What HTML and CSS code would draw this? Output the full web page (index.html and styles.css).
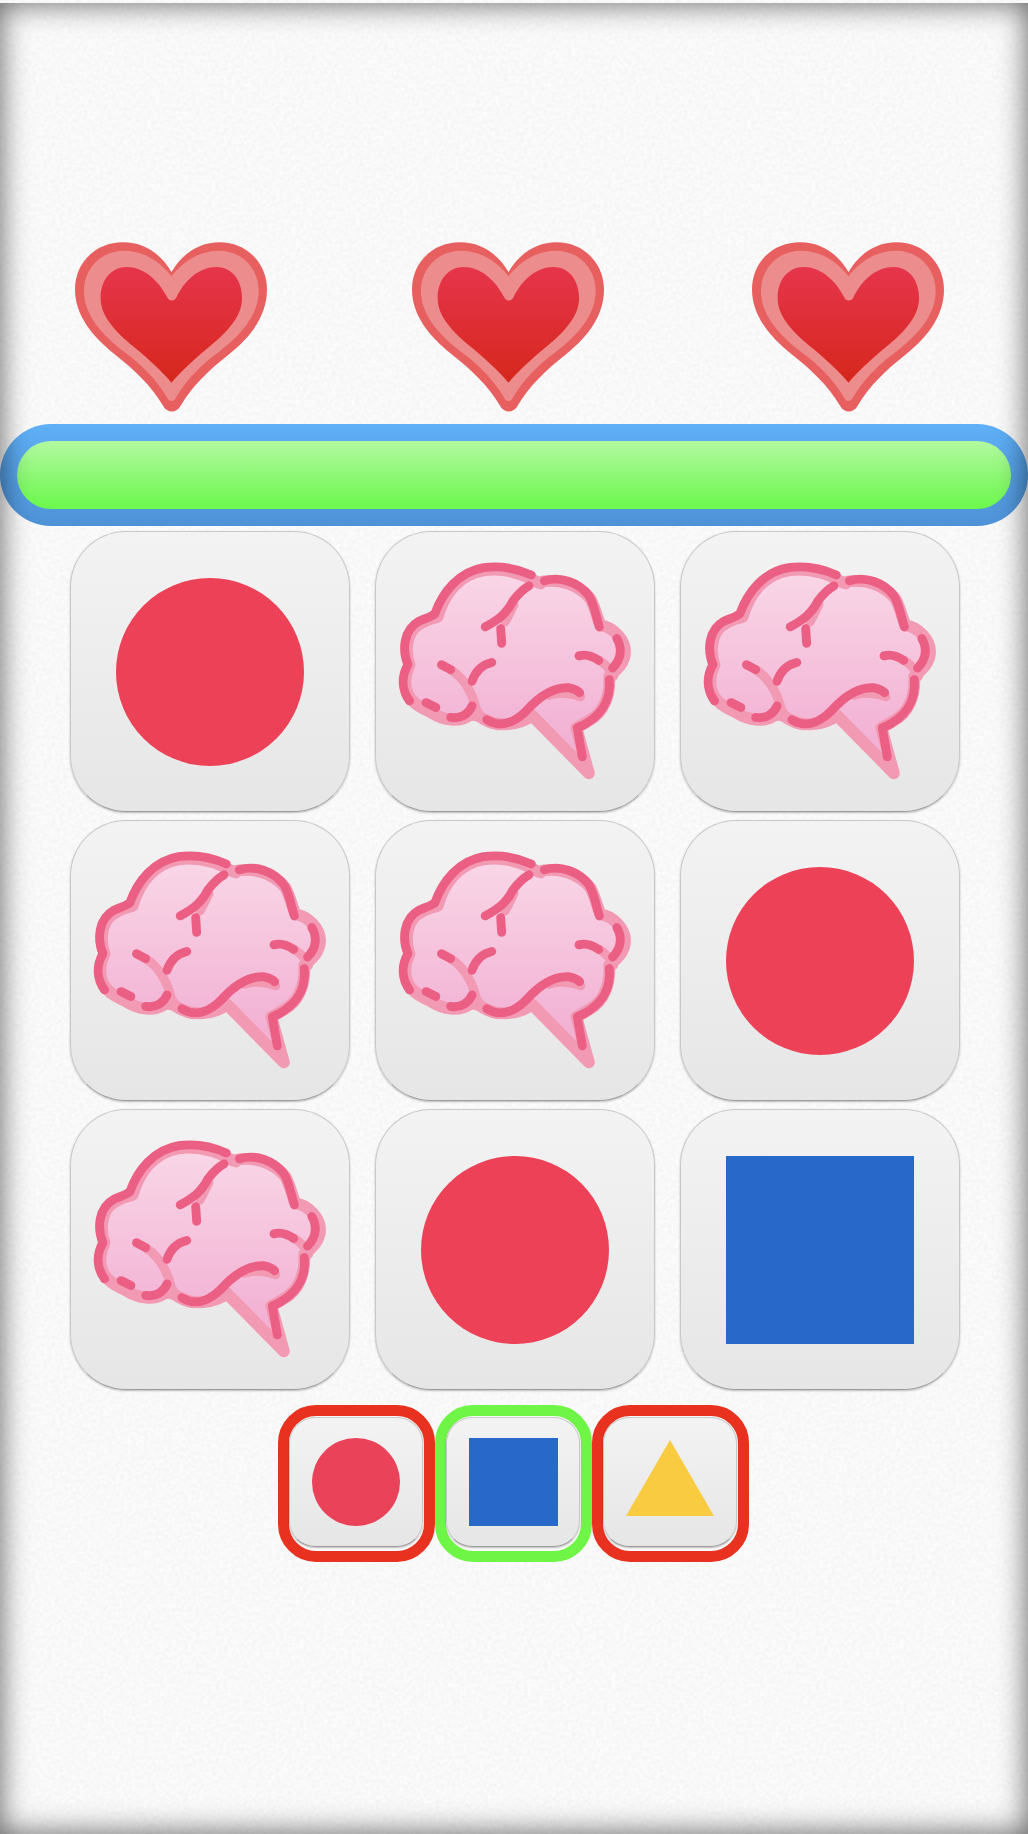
FILE: index.html
```html
<!DOCTYPE html>
<html lang="en">
<head>
  <meta charset="UTF-8">
  <title>Shape memory</title>
  <link rel="stylesheet" href="styles.css">
</head>
<body>

<svg class="defs" aria-hidden="true">
  <defs>
    <linearGradient id="heartRed" x1="0" y1="0" x2="0" y2="1">
      <stop offset="0" stop-color="#e6354c"/>
      <stop offset="1" stop-color="#d6271c"/>
    </linearGradient>
    <linearGradient id="brainPink" x1="0" y1="0" x2="0" y2="1">
      <stop offset="0" stop-color="#f9d7e7"/>
      <stop offset="1" stop-color="#f1aad0"/>
    </linearGradient>

    <symbol id="heart" viewBox="45 38 577 512">
      <path fill="#e7605f" d="M335,127 C305,75 255,38 190,38 C105,38 45,100 45,180 C45,255 95,320 165,375 C225,422 275,470 310,530 C322,552 350,552 362,530 C397,470 447,422 507,375 C577,320 622,255 622,180 C622,100 560,38 480,38 C415,38 365,75 335,127Z"/>
      <path fill="#ec8c8d" d="M335,140 C300,95 250,63 192,63 C125,63 72,115 72,185 C72,255 125,315 190,365 C245,405 290,450 322,505 C328,518 342,518 348,505 C380,450 425,405 480,365 C545,315 597,255 597,185 C597,115 545,63 478,63 C420,63 370,95 335,140Z"/>
      <path fill="url(#heartRed)" d="M322,203 C295,150 250,112 200,112 C155,112 122,150 122,205 C122,260 165,305 225,355 C270,392 305,425 335,460 C365,425 400,392 445,355 C505,305 547,260 547,205 C547,150 515,112 470,112 C420,112 375,150 350,203 C343,216 329,216 322,203Z"/>
    </symbol>

    <symbol id="brain" viewBox="13 3 845 845">
      <path fill="url(#brainPink)" stroke="#f29ab4" stroke-width="36" stroke-linejoin="round" d="M660,735 L488,560 C445,590 385,595 340,570 C320,555 305,555 295,560 C265,580 220,575 180,550 C150,535 115,520 105,480 C98,450 105,425 115,405 C100,365 105,310 140,285 C160,270 180,265 200,260 C220,190 265,130 340,118 C400,110 455,125 505,155 C565,140 630,160 665,205 C680,235 685,260 695,285 C735,290 770,330 770,365 C770,400 745,420 722,440 C725,500 705,550 660,575 C645,585 635,590 622,597Z"/>
      <g fill="none" stroke="#f29ab4" stroke-width="28" stroke-linecap="round">
        <path d="M240,420 C280,445 305,490 318,540 C330,570 355,585 385,590"/>
        <path d="M690,392 C710,402 725,420 735,440"/>
        <path d="M405,275 C420,250 425,235 432,222"/>
        <path d="M470,135 L515,162"/>
        <path d="M540,497 C570,487 610,492 635,502"/>
      </g>
      <g fill="none" stroke="#ec5f84" stroke-width="27" stroke-linecap="round" stroke-linejoin="round">
        <path d="M115,515 C90,480 90,440 110,405 C92,360 95,300 145,272 C160,265 175,262 192,250 C215,185 265,122 340,110 C390,103 440,112 485,132"/>
        <path d="M525,150 C575,135 630,155 660,195 C680,230 680,255 692,290"/>
        <path d="M745,325 C760,350 762,385 732,415"/>
        <path d="M722,450 C728,510 700,565 625,597 L640,685"/>
        <path d="M165,520 L195,535"/>
        <path d="M240,565 C270,570 295,555 305,530"/>
        <path d="M212,405 L240,420"/>
        <path d="M305,455 C315,425 335,405 365,398"/>
        <path d="M350,572 C395,600 440,575 470,545 C510,500 555,472 600,475 C615,478 625,482 632,490"/>
        <path d="M345,290 C385,268 410,250 430,210 C445,190 460,175 478,165"/>
        <path d="M395,340 L392,295"/>
        <path d="M630,378 C650,372 670,378 690,392"/>
      </g>
    </symbol>
  </defs>
</svg>

<div class="game">
  <div class="lives">
    <svg class="heart"><use href="#heart"/></svg>
    <svg class="heart"><use href="#heart"/></svg>
    <svg class="heart"><use href="#heart"/></svg>
  </div>

  <div class="timer"><div class="timer-fill"></div></div>

  <div class="board">
    <div class="tile"><div class="circle"></div></div>
    <div class="tile"><svg class="brain"><use href="#brain"/></svg></div>
    <div class="tile"><svg class="brain"><use href="#brain"/></svg></div>
    <div class="tile"><svg class="brain"><use href="#brain"/></svg></div>
    <div class="tile"><svg class="brain"><use href="#brain"/></svg></div>
    <div class="tile"><div class="circle"></div></div>
    <div class="tile"><svg class="brain"><use href="#brain"/></svg></div>
    <div class="tile"><div class="circle"></div></div>
    <div class="tile"><div class="square"></div></div>
  </div>

  <div class="answers">
    <button class="answer wrong"><span class="tile small"><span class="circle"></span></span></button>
    <button class="answer right"><span class="tile small"><span class="square"></span></span></button>
    <button class="answer wrong"><span class="tile small"><span class="triangle"></span></span></button>
  </div>
</div>

</body>
</html>
```

FILE: styles.css
```css
html, body {
  margin: 0;
  height: 100%;
}

body {
  position: relative;
  height: 1834px;
  overflow: hidden;
  background-color: #fcfcfc;
  background-image: url("data:image/svg+xml,%3Csvg xmlns='http://www.w3.org/2000/svg' width='300' height='300'%3E%3Cfilter id='n'%3E%3CfeTurbulence type='fractalNoise' baseFrequency='.25' numOctaves='2'/%3E%3CfeColorMatrix values='0 0 0 0 .5 0 0 0 0 .5 0 0 0 0 .5 .2 0 0 0 -.05'/%3E%3C/filter%3E%3Crect width='300' height='300' filter='url(%23n)'/%3E%3C/svg%3E");
}

/* vignette round the whole page */
body::after {
  content: "";
  position: absolute;
  inset: 3px 0 0 0;
  box-shadow: inset 0 0 30px rgba(0, 0, 0, 0.62);
  pointer-events: none;
}

.defs {
  position: absolute;
  width: 0;
  height: 0;
}

.game {
  padding-top: 242px;
}

.lives {
  display: grid;
  grid-template-columns: 337px 340px 192px;
  padding-left: 75px;
}

.heart {
  display: block;
  width: 192px;
  height: 171px;
}

.timer {
  margin-top: 11px;
  height: 102px;
  padding: 17px;
  box-sizing: border-box;
  border-radius: 51px;
  background: linear-gradient(#5fb0f7, #4e92d6);
}

.timer-fill {
  height: 100%;
  border-radius: 34px;
  background: linear-gradient(#b2f9a0, #6bf84b);
}

.board {
  display: grid;
  grid-template-columns: repeat(3, 280px);
  grid-auto-rows: 281px;
  column-gap: 25px;
  row-gap: 8px;
  margin-top: 5px;
  padding-left: 70px;
}

.tile {
  display: flex;
  align-items: center;
  justify-content: center;
  box-sizing: border-box;
  border: 1px solid #c8c8c8;
  border-bottom-color: #9c9c9c;
  border-radius: 56px;
  background: linear-gradient(#f3f3f3, #e6e6e6);
  box-shadow: 0 1px 2px rgba(0, 0, 0, 0.25);
}

.circle {
  width: 188px;
  height: 188px;
  border-radius: 50%;
  background: #ec4157;
}

.square {
  width: 188px;
  height: 188px;
  background: #2868c9;
}

.brain {
  display: block;
  width: 100%;
  height: 100%;
}

.answers {
  display: flex;
  margin-top: 15px;
  padding-left: 278px;
}

.answer {
  width: 157px;
  height: 157px;
  padding: 1px 1px 4px 0;
  box-sizing: border-box;
  border: 11px solid;
  border-radius: 38px;
  background: #fbfbfb;
}

.answer.wrong {
  border-color: #e8321f;
}

.answer.right {
  border-color: #6ef546;
}

.tile.small {
  width: 100%;
  height: 100%;
  border-radius: 26px;
}

.small .circle {
  width: 88px;
  height: 88px;
  background: #e94259;
}

.small .square {
  width: 89px;
  height: 88px;
}

.triangle {
  width: 88px;
  height: 76px;
  margin-bottom: 8px;
  background: #f8cb40;
  clip-path: polygon(50% 0, 100% 100%, 0 100%);
}
```
